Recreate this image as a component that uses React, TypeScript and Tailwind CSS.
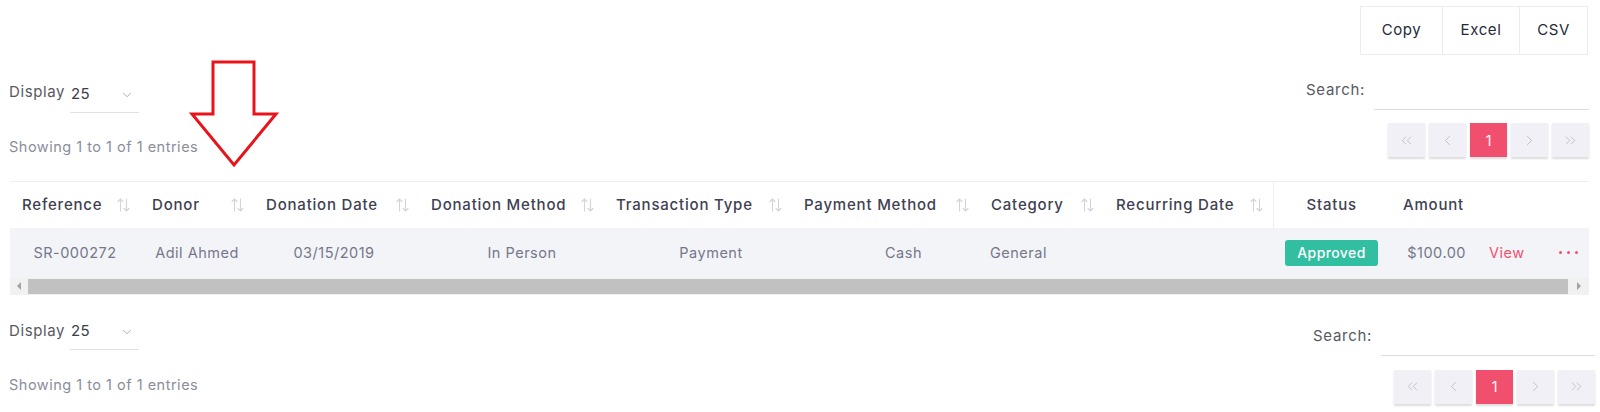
import { ChevronDown, ChevronLeft, ChevronRight, ChevronsLeft, ChevronsRight } from 'lucide-react';

const headers = ['Reference', 'Donor', 'Donation Date', 'Donation Method', 'Transaction Type', 'Payment Method', 'Category', 'Recurring Date'];

function SortIcon() {
  return (
    <svg className="absolute right-[10px] top-1/2 -translate-y-1/2" width="13" height="15" viewBox="0 0 13 15" fill="none" stroke="#d2d3db" strokeWidth="1.1" strokeLinecap="round">
      <path d="M3.5 13.5V1.5M1 4l2.5-2.5L6 4" />
      <path d="M9.5 1.5v12M7 11l2.5 2.5L12 11" />
    </svg>
  );
}

function DisplaySelect({ labelTop, selectTop }: { labelTop: string; selectTop: string }) {
  return (
    <div className="flex items-start">
      <span className={`text-[15px] leading-[20px] tracking-[0.6px] text-[#575962] ${labelTop}`}>Display</span>
      <div className={`ml-[5px] flex h-[33px] w-[69px] items-start justify-between border-b border-[#e2e2e6] pl-[1px] pr-[5px] pt-[4px] ${selectTop}`}>
        <span className="text-[15px] leading-[20px] tracking-[0.4px] text-[#3b3e4a]">25</span>
        <ChevronDown size={14} strokeWidth={1.2} className="mt-[4px] text-[#8a8c98]" />
      </div>
    </div>
  );
}

function Search({ top, width }: { top: string; width: string }) {
  return (
    <div className={`flex items-start ${top}`}>
      <span className="text-[15px] leading-[20px] tracking-[0.7px] text-[#575962]">Search:</span>
      <div className={`ml-[9px] h-[30px] border-b border-[#dcdce0] ${width}`} />
    </div>
  );
}

function Pagination({ top }: { top: string }) {
  const btn = 'flex h-[34px] w-[37px] items-center justify-center bg-[#f0f0f6] shadow-[0_2px_2px_rgba(0,0,0,0.14)] text-[#b3b4bf]';
  return (
    <div className={`flex gap-[4px] ${top}`}>
      <div className={btn}><ChevronsLeft size={17} strokeWidth={1.1} /></div>
      <div className={btn}><ChevronLeft size={17} strokeWidth={1.1} /></div>
      <div className="flex h-[34px] w-[37px] items-center justify-center bg-[#f0506e] text-[14px] text-white shadow-[0_2px_2px_rgba(0,0,0,0.14)]">1</div>
      <div className={btn}><ChevronRight size={17} strokeWidth={1.1} /></div>
      <div className={btn}><ChevronsRight size={17} strokeWidth={1.1} /></div>
    </div>
  );
}

export default function App() {
  return (
    <div className="relative h-[412px] w-[1600px] overflow-hidden bg-white font-['Inter',sans-serif]">
      {/* export buttons */}
      <div className="flex h-[60px] justify-end pr-[12px] pt-[6px]">
        <div className="flex h-[49px] border border-[#ececf0] text-[15px] tracking-[0.6px] text-[#1f2a3c]">
          <div className="flex w-[82px] items-center justify-center border-r border-[#ececf0]">Copy</div>
          <div className="flex w-[77px] items-center justify-center border-r border-[#ececf0]">Excel</div>
          <div className="flex w-[67px] items-center justify-center">CSV</div>
        </div>
      </div>

      {/* filters */}
      <div className="flex h-[58px] items-start justify-between pl-[9px] pr-[11px]">
        <DisplaySelect labelTop="mt-[22px]" selectTop="mt-[20px]" />
        <Search top="mt-[20px]" width="w-[215px]" />
      </div>

      <div className="flex h-[63px] items-start justify-between pl-[9px] pr-[11px]">
        <span className="mt-[19px] text-[14.5px] leading-[20px] tracking-[0.5px] text-[#8b8d9a]">Showing 1 to 1 of 1 entries</span>
        <Pagination top="mt-[5px]" />
      </div>

      {/* table */}
      <div className="ml-[10px] w-[1579px]">
        <table className="w-full table-fixed border-collapse">
          <colgroup>
            <col className="w-[130px]" />
            <col className="w-[114px]" />
            <col className="w-[165px]" />
            <col className="w-[185px]" />
            <col className="w-[188px]" />
            <col className="w-[187px]" />
            <col className="w-[125px]" />
            <col className="w-[169px]" />
            <col className="w-[117px]" />
            <col className="w-[90px]" />
            <col className="w-[61px]" />
            <col />
          </colgroup>
          <thead>
            <tr className="h-[46px] border-t border-[#eeeef2] text-[15px] tracking-[0.8px] text-[#404152]">
              {headers.map((h, i) => (
                <th key={h} className={`relative pl-[12px] text-left font-medium ${i === 7 ? 'border-r border-[#eeeef2]' : ''}`}>
                  {h}
                  <SortIcon />
                </th>
              ))}
              <th className="text-center font-medium">Status</th>
              <th className="pl-[13px] text-left font-medium">Amount</th>
              <th />
              <th />
            </tr>
          </thead>
          <tbody>
            <tr className="h-[50px] bg-[#f3f4f8] text-[14.5px] tracking-[0.5px] text-[#75778b]">
              <td className="text-center">SR-000272</td>
              <td className="text-center">Adil Ahmed</td>
              <td className="pr-[5px] text-center">03/15/2019</td>
              <td className="pl-[21px] text-center">In Person</td>
              <td className="pl-[26px] text-center">Payment</td>
              <td className="pl-[36px] text-center">Cash</td>
              <td className="pl-[11px] text-left">General</td>
              <td />
              <td className="text-center">
                <span className="inline-flex h-[26px] w-[93px] items-center justify-center rounded-[3px] bg-[#32bea0] text-[14px] font-medium tracking-[0.4px] text-white">Approved</span>
              </td>
              <td className="pr-[14px] text-right">$100.00</td>
              <td className="pl-[9px] text-left text-[#f0506e]">View</td>
              <td>
                <div className="flex justify-center gap-[5px] pl-[6px]">
                  <span className="h-[3px] w-[3px] rounded-full bg-[#f0506e]" />
                  <span className="h-[3px] w-[3px] rounded-full bg-[#f0506e]" />
                  <span className="h-[3px] w-[3px] rounded-full bg-[#f0506e]" />
                </div>
              </td>
            </tr>
          </tbody>
        </table>
        {/* horizontal scrollbar */}
        <div className="flex h-[17px] items-center bg-[#f1f1f1]">
          <div className="flex w-[18px] justify-center">
            <span className="h-0 w-0 border-y-[4px] border-r-[4px] border-y-transparent border-r-[#a3a3a3]" />
          </div>
          <div className="h-[15px] flex-1 bg-[#c1c1c1]" />
          <div className="flex w-[21px] justify-center">
            <span className="h-0 w-0 border-y-[4px] border-l-[4px] border-y-transparent border-l-[#a3a3a3]" />
          </div>
        </div>
      </div>

      {/* bottom controls */}
      <div className="flex h-[62px] items-start justify-between pl-[9px] pr-[5px]">
        <DisplaySelect labelTop="mt-[26px]" selectTop="mt-[22px]" />
        <Search top="mt-[31px]" width="w-[214px]" />
      </div>
      <div className="flex items-start justify-between pl-[9px] pr-[5px]">
        <span className="mt-[18px] text-[14.5px] leading-[20px] tracking-[0.5px] text-[#8b8d9a]">Showing 1 to 1 of 1 entries</span>
        <Pagination top="mt-[13px]" />
      </div>

      {/* annotation arrow */}
      <svg className="pointer-events-none absolute left-0 top-0" width="300" height="180" viewBox="0 0 300 180">
        <path d="M213 62H254V114H276L234 165L192 114H213Z" fill="white" stroke="#e8141c" strokeWidth="3" strokeLinejoin="miter" />
      </svg>
    </div>
  );
}
